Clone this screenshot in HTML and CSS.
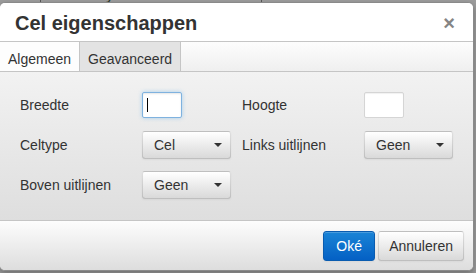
FILE: index.html
```html
<!DOCTYPE html>
<html lang="nl">
<head>
<meta charset="utf-8">
<title>Cel eigenschappen</title>
<link rel="stylesheet" href="styles.css">
</head>
<body>
<div class="backdrop">
  <div class="page-strip"><span class="rule"></span><span class="bullet">&#9679;</span><span class="page-text">Bulletsymbool - door de</span><span class="rule rule-2"></span></div>
  <div class="dialog">
    <div class="head">
      <div class="title">Cel eigenschappen</div>
      <div class="close">&times;</div>
    </div>
    <div class="tabs">
      <div class="tab active">Algemeen</div>
      <div class="tab">Geavanceerd</div>
      <div class="tabs-fill"></div>
    </div>
    <div class="panel">
      <div class="label">Breedte</div>
      <div class="cell"><span class="field focus"><span class="caret"></span></span></div>
      <div class="label">Hoogte</div>
      <div class="cell"><span class="field"></span></div>

      <div class="label">Celtype</div>
      <div class="cell"><span class="select">Cel<span class="arrow"></span></span></div>
      <div class="label">Links uitlijnen</div>
      <div class="cell"><span class="select">Geen<span class="arrow"></span></span></div>

      <div class="label">Boven uitlijnen</div>
      <div class="cell"><span class="select">Geen<span class="arrow"></span></span></div>
    </div>
    <div class="foot">
      <button class="btn primary">Oké</button>
      <button class="btn">Annuleren</button>
    </div>
  </div>
</div>
</body>
</html>
```

FILE: styles.css
```css
html, body {
  margin: 0;
  padding: 0;
}
body {
  background: #9b9b9b;
  font-family: Arial, "Liberation Sans", sans-serif;
  font-size: 14px;
  color: #333;
  width: 476px;
  height: 273px;
  overflow: hidden;
}
.backdrop {
  width: 476px;
  height: 273px;
  background: #9d9d9d;
}
.page-strip {
  height: 2px;
  overflow: hidden;
  display: flex;
  align-items: flex-end;
  white-space: nowrap;
  font-size: 16px;
  line-height: 14px;
  color: #2c3a2c;
}
.page-strip .rule {
  display: inline-block;
  width: 1px;
  height: 10px;
  background: #555;
  margin-left: 40px;
  align-self: flex-end;
}
.page-strip .rule-2 {
  margin-left: 35px;
}
.page-strip .bullet {
  color: #1c5a1c;
  font-size: 8px;
  margin: 0 8px 0 4px;
}
.dialog {
  box-sizing: border-box;
  width: 475px;
  height: 269px;
  margin-left: -1px;
  border: 1px solid #8a8a8a;
  border-radius: 6px;
  background: #f0f0f0;
  overflow: hidden;
  display: flex;
  flex-direction: column;
  box-shadow: 0 3px 7px rgba(0,0,0,0.3);
}
.head {
  display: flex;
  align-items: center;
  justify-content: space-between;
  padding: 10px 14px 8px 15px;
  height: 20px;
  background: #fff;
  border-bottom: 1px solid #c5c5c5;
}
.title {
  font-size: 20px;
  line-height: 20px;
  font-weight: bold;
  color: #333;
}
.close {
  width: 20px;
  text-align: center;
  font-size: 20px;
  line-height: 20px;
  font-weight: bold;
  color: #858585;
}
.tabs {
  display: flex;
  height: 29px;
  background: linear-gradient(to bottom, #fdfdfd, #efefef);
  border-bottom: 1px solid #c5c5c5;
}
.tab {
  box-sizing: border-box;
  height: 29px;
  padding: 9px 8px 0 8px;
  line-height: 16px;
  background: #e3e3e3;
  border-right: 1px solid #c5c5c5;
  color: #333;
}
.tab.active {
  background: #fdfdfd;
}
.tabs-fill {
  flex: 1;
}
.panel {
  flex: 1;
  display: grid;
  grid-template-columns: 122px 100px 122px 1fr;
  grid-auto-rows: 28px;
  row-gap: 12px;
  align-content: start;
  padding: 19px 0 0 20px;
  background: linear-gradient(to bottom, #f2f2f2, #dedede);
}
.label {
  display: flex;
  align-items: center;
  line-height: 16px;
  color: #333;
}
.cell {
  display: flex;
  align-items: center;
}
.field {
  box-sizing: border-box;
  display: flex;
  align-items: center;
  width: 40px;
  height: 26px;
  padding-left: 4px;
  background: #fff;
  border: 1px solid #d5d5d5;
  border-radius: 2px;
  box-shadow: inset 0 1px 1px rgba(0,0,0,0.06);
}
.field.focus {
  border-color: #7fb2df;
  box-shadow: inset 0 1px 2px rgba(0,0,0,0.1), 0 0 4px rgba(82,168,236,0.45);
}
.caret {
  display: block;
  width: 1px;
  height: 14px;
  background: #000;
}
.select {
  box-sizing: border-box;
  display: flex;
  align-items: center;
  justify-content: space-between;
  width: 89px;
  height: 28px;
  padding: 0 8px 0 11px;
  line-height: 20px;
  color: #333;
  border: 1px solid rgba(0,0,0,0.12);
  border-bottom-color: rgba(0,0,0,0.25);
  border-radius: 3px;
  background: linear-gradient(to bottom, #fff, #d9d9d9);
  box-shadow: inset 0 1px 0 rgba(255,255,255,0.2), 0 1px 2px rgba(0,0,0,0.05);
}
.arrow {
  width: 0;
  height: 0;
  border-top: 4px solid #333;
  border-left: 4px solid transparent;
  border-right: 4px solid transparent;
}
.foot {
  box-sizing: border-box;
  height: 50px;
  display: flex;
  justify-content: flex-end;
  align-items: flex-start;
  gap: 3px;
  padding: 10px 9px 0 0;
  border-top: 1px solid #c5c5c5;
  background: linear-gradient(to bottom, #fdfdfd, #dddddd);
}
.btn {
  box-sizing: border-box;
  height: 30px;
  padding: 4px 10px;
  font-family: Arial, "Liberation Sans", sans-serif;
  font-size: 14px;
  line-height: 20px;
  color: #333;
  border: 1px solid rgba(0,0,0,0.12);
  border-bottom-color: rgba(0,0,0,0.25);
  border-radius: 3px;
  background: linear-gradient(to bottom, #fff, #d9d9d9);
  box-shadow: inset 0 1px 0 rgba(255,255,255,0.2), 0 1px 2px rgba(0,0,0,0.05);
}
.btn.primary {
  min-width: 52px;
  color: #fff;
  border-color: #0a5cb0;
  background: linear-gradient(to bottom, #1a84d6, #0460c4);
}
```
